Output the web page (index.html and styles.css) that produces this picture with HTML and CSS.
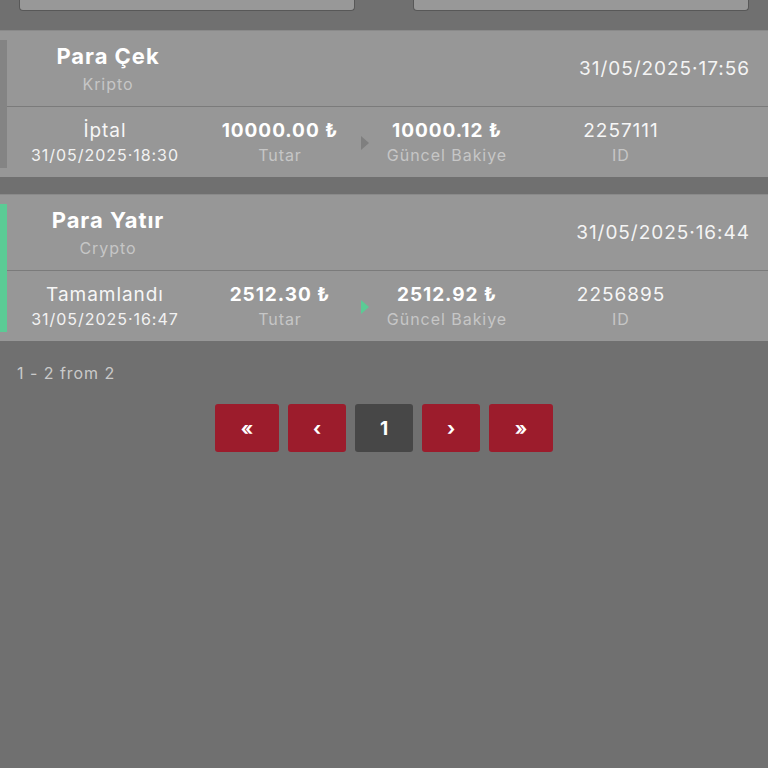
FILE: index.html
```html
<!DOCTYPE html>
<html lang="tr">
<head>
<meta charset="utf-8">
<link rel="stylesheet" href="styles.css">
</head>
<body>
<div class="topbar">
  <div class="topbox"></div>
  <div class="topbox"></div>
</div>

<div class="card">
  <div class="bar bar-gray"></div>
  <div class="content">
    <div class="head">
      <div class="titleblock">
        <div class="title">Para Çek</div>
        <div class="sub">Kripto</div>
      </div>
      <div class="date">31/05/2025·17:56</div>
    </div>
    <div class="row">
      <div class="col c1">
        <div class="main">İptal</div>
        <div class="minor light">31/05/2025·18:30</div>
      </div>
      <div class="col c2">
        <div class="main bold">10000.00 ₺</div>
        <div class="minor">Tutar</div>
      </div>
      <div class="arrow"><span class="tri tri-gray"></span></div>
      <div class="col c3">
        <div class="main bold">10000.12 ₺</div>
        <div class="minor">Güncel Bakiye</div>
      </div>
      <div class="col c4">
        <div class="main">2257111</div>
        <div class="minor">ID</div>
      </div>
    </div>
  </div>
</div>

<div class="card card2">
  <div class="bar bar-green"></div>
  <div class="content">
    <div class="head">
      <div class="titleblock">
        <div class="title">Para Yatır</div>
        <div class="sub">Crypto</div>
      </div>
      <div class="date">31/05/2025·16:44</div>
    </div>
    <div class="row">
      <div class="col c1">
        <div class="main">Tamamlandı</div>
        <div class="minor light">31/05/2025·16:47</div>
      </div>
      <div class="col c2">
        <div class="main bold">2512.30 ₺</div>
        <div class="minor">Tutar</div>
      </div>
      <div class="arrow"><span class="tri tri-green"></span></div>
      <div class="col c3">
        <div class="main bold">2512.92 ₺</div>
        <div class="minor">Güncel Bakiye</div>
      </div>
      <div class="col c4">
        <div class="main">2256895</div>
        <div class="minor">ID</div>
      </div>
    </div>
  </div>
</div>

<div class="count">1 - 2 from 2</div>

<div class="pager">
  <div class="pg pg-wide">«</div>
  <div class="pg">‹</div>
  <div class="pg pg-active">1</div>
  <div class="pg">›</div>
  <div class="pg pg-wide">»</div>
</div>
</body>
</html>
```

FILE: styles.css
```css
html, body {
  margin: 0;
  padding: 0;
}
body {
  background: #707070;
  font-family: Inter, "Liberation Sans", sans-serif;
  letter-spacing: 0.06em;
  color: #ffffff;
  width: 768px;
  height: 768px;
  overflow: hidden;
}
.topbar {
  display: flex;
  gap: 58px;
  padding: 0 19px;
  height: 12px;
}
.topbox {
  flex: 1;
  height: 10px;
  background: #989898;
  border: 1.5px solid #585858;
  border-top: none;
  border-radius: 0 0 4px 4px;
}
.card {
  margin-top: 18px;
  background: #979797;
  display: flex;
  border-top: 1px solid #8a8a8a;
}
.card2 {
  margin-top: 17px;
}
.bar {
  width: 7px;
  margin: 9px 0 9px 0;
  flex: none;
}
.bar-gray {
  background: #848484;
}
.bar-green {
  background: #5bcb95;
}
.content {
  flex: 1;
  display: flex;
  flex-direction: column;
}
.head {
  display: flex;
  align-items: center;
  justify-content: space-between;
  height: 75px;
  border-bottom: 1.5px solid #7b7b7b;
  padding-right: 18px;
}
.titleblock {
  width: 202px;
  display: flex;
  flex-direction: column;
  align-items: center;
  margin-top: -1px;
}
.title {
  font-size: 22px;
  font-weight: 700;
  line-height: 26px;
}
.sub {
  font-size: 16px;
  line-height: 20px;
  margin-top: 5px;
  color: #c6c6c6;
}
.date {
  font-size: 19px;
  line-height: 24px;
  color: #f4f4f4;
}
.row {
  display: flex;
  align-items: center;
  height: 70px;
}
.col {
  display: flex;
  flex-direction: column;
  align-items: center;
  flex: none;
}
.c1 { width: 196px; }
.c2 { width: 154px; }
.c3 { width: 148px; }
.c4 { width: 200px; }
.arrow {
  width: 16px;
  flex: none;
  display: flex;
  justify-content: center;
  margin-top: 2px;
}
.tri {
  width: 0;
  height: 0;
  border-top: 7px solid transparent;
  border-bottom: 7px solid transparent;
  border-left: 8px solid #7f7f7f;
}
.tri-green {
  border-left-color: #5bcb95;
}
.main {
  font-size: 19px;
  line-height: 23px;
  color: #f6f6f6;
}
.bold {
  font-weight: 700;
  color: #ffffff;
}
.minor {
  font-size: 16px;
  line-height: 20px;
  margin-top: 3px;
  color: #c6c6c6;
}
.minor.light {
  color: #f2f2f2;
}
.count {
  margin-top: 22px;
  padding-left: 17px;
  font-size: 16px;
  line-height: 20px;
  color: #cacaca;
}
.pager {
  margin-top: 21px;
  display: flex;
  justify-content: center;
  gap: 9px;
}
.pg {
  width: 58px;
  height: 48px;
  border-radius: 3px;
  background: #9c1c2c;
  display: flex;
  align-items: center;
  justify-content: center;
  font-size: 19px;
  font-weight: 700;
  letter-spacing: 0;
  color: #ffffff;
}
.pg-wide {
  width: 64px;
}
.pg-active {
  background: #474747;
}
```
